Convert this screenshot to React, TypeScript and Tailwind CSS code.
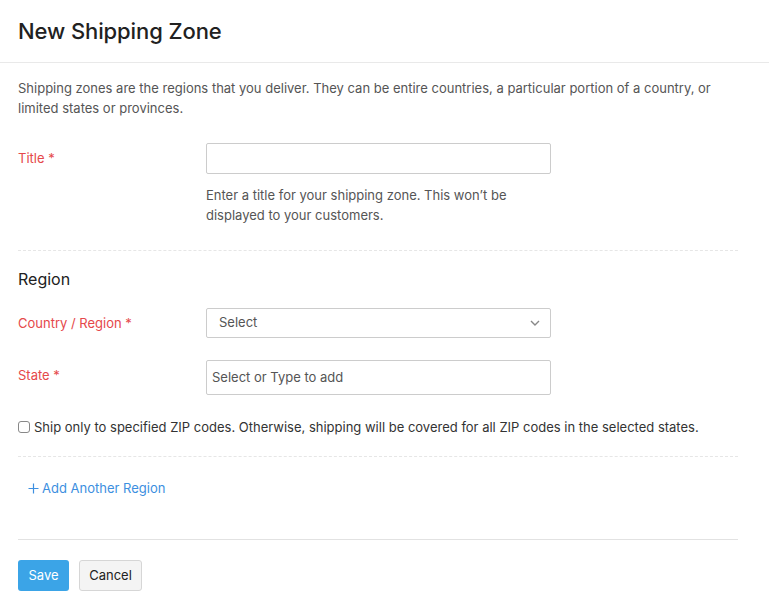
import React from 'react';

const font = { fontFamily: 'Inter, "Noto Sans", "Liberation Sans", sans-serif' };

const FieldRow: React.FC<{ label: string; children: React.ReactNode; className?: string }> = ({ label, children, className }) => (
  <div className={`flex ${className ?? ''}`}>
    <div className="w-[188px] shrink-0 flex items-center h-[31px] text-[13px] text-[#e5484a]">{label}</div>
    <div className="w-[345px]">{children}</div>
  </div>
);

export default function App() {
  return (
    <div className="bg-white min-h-screen text-[#333]" style={font}>
      {/* Header */}
      <div className="h-[63px] border-b border-[#e9e9e9] flex items-center px-[18px]">
        <h1 className="text-[22px] font-medium text-[#212121] tracking-[-0.1px]">New Shipping Zone</h1>
      </div>

      <div className="w-[720px] ml-[18px]">
        <p className="mt-[15px] text-[13px] leading-[20px] text-[#555]">
          Shipping zones are the regions that you deliver. They can be entire countries, a particular portion of a country, or
          limited states or provinces.
        </p>

        <FieldRow label="Title *" className="mt-[25px]">
          <input className="w-full h-[31px] border border-[#ccc] rounded-[2px] px-2 text-[13px] outline-none" />
          <p className="mt-[11px] text-[13px] leading-[20px] text-[#555]">
            Enter a title for your shipping zone. This won’t be
            <br />
            displayed to your customers.
          </p>
        </FieldRow>

        <div className="mt-[25px] border-t border-dashed border-[#e6e6e6]" />

        <h2 className="mt-[17px] text-[16px] leading-[22px] text-[#212121]">Region</h2>

        <FieldRow label="Country / Region *" className="mt-[18px]">
          <div className="w-full h-[30px] border border-[#ccc] rounded-[2px] flex items-center justify-between pl-3 pr-[10px] text-[13px] text-[#555]">
            <span>Select</span>
            <svg width="10" height="6" viewBox="0 0 10 6" fill="none">
              <path d="M1 1l4 4 4-4" stroke="#888" strokeWidth="1.4" />
            </svg>
          </div>
        </FieldRow>

        <div className="flex mt-[21px]">
          <div className="w-[188px] shrink-0 flex items-center h-[31px] text-[13px] text-[#e5484a]">State *</div>
          <div className="w-[345px] h-[35px] border border-[#ccc] rounded-[2px] flex items-center px-[5px] text-[13px] text-[#555]">
            Select or Type to add
          </div>
        </div>

        <label className="mt-[22px] flex items-center gap-[4px] text-[13px] leading-[20px] text-[#333]">
          <span className="w-[12px] h-[12px] border border-[#888] rounded-[3px] bg-white shrink-0" />
          Ship only to specified ZIP codes. Otherwise, shipping will be covered for all ZIP codes in the selected states.
        </label>

        <div className="mt-[19px] border-t border-dashed border-[#e6e6e6]" />

        <div className="mt-[21px] pl-[10px] flex items-center gap-[3px] text-[13px] leading-[20px] text-[#3d8fe0]">
          <svg width="11" height="11" viewBox="0 0 11 11">
            <path d="M5.5 0.5v10M0.5 5.5h10" stroke="#3d8fe0" strokeWidth="1.2" />
          </svg>
          Add Another Region
        </div>

        <div className="mt-[41px] border-t border-[#e2e2e2]" />

        <div className="mt-[20px] flex gap-[10px]">
          <button className="h-[31px] w-[51px] rounded-[3px] bg-[#3ba4e7] text-white text-[13px]">Save</button>
          <button className="h-[31px] w-[63px] rounded-[3px] bg-[#f4f4f4] border border-[#d6d6d6] text-[#222] text-[13px]">Cancel</button>
        </div>
      </div>
    </div>
  );
}
